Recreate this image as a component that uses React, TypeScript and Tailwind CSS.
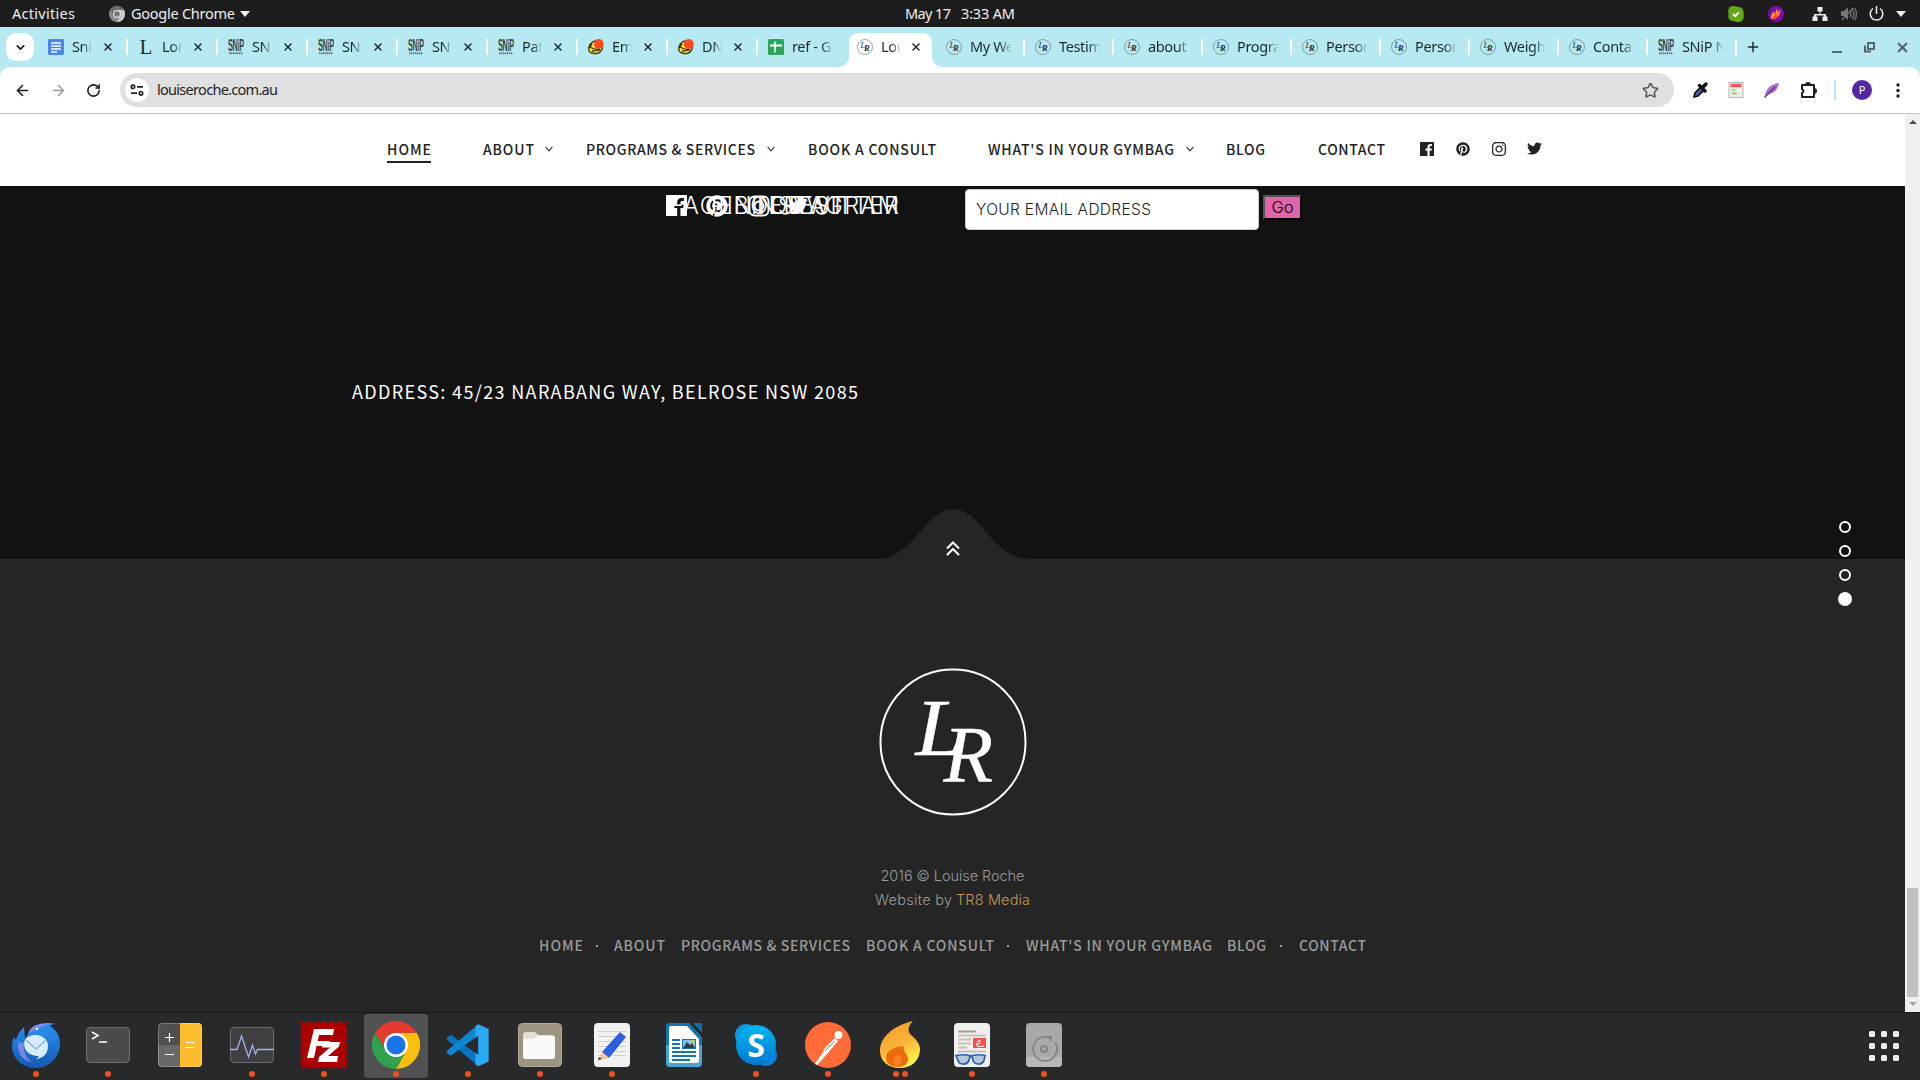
import React, { useLayoutEffect, useRef, useState } from 'react';
import { ArrowLeft, ArrowRight, ChevronDown, Plus, RotateCw, Star, X } from 'lucide-react';
import { FaPinterest, FaTwitter, FaInstagram } from 'react-icons/fa';

/** Single-line text whose tracking is adjusted so that it spans `w` pixels. */
function Fit({ w, children, className = '' }: { w: number; children: string; className?: string }) {
  const ref = useRef<HTMLSpanElement>(null);
  const [spacing, setSpacing] = useState(0);
  useLayoutEffect(() => {
    if (ref.current) {
      const natural = ref.current.getBoundingClientRect().width;
      setSpacing((w - natural) / (children.length - 1));
    }
  }, [w, children]);
  return (
    <span className={'block shrink-0 whitespace-pre ' + className} style={{ width: w }}>
      <span ref={ref} className="inline-block" style={{ letterSpacing: spacing }}>{children}</span>
    </span>
  );
}

const ubuntu = "font-['Noto_Sans',sans-serif]";
const cabin = "font-['Noto_Sans_CJK_SC','Noto_Sans',sans-serif]";
const mont = "font-['Inter',sans-serif]";

function FacebookSquare({ size }: { size: number }) {
  return (
    <svg width={size} height={size} viewBox="0 0 16 16" fill="currentColor" className="block shrink-0">
      <path d="M0 .6Q0 0 .6 0h14.8q.6 0 .6.6v14.8q0 .6-.6.6H11V9.900h2.100l.4-2.500H11V5.900c0-.8.3-1.300 1.400-1.300h1.200V2.300c-.3 0-1-.1-1.800-.1-2 0-3.300 1.200-3.300 3.300v1.900H6.300v2.500h2.200V16H.6Q0 16 0 15.400z" />
    </svg>
  );
}

/* ---------- system bar ---------- */

function SystemBar() {
  return (
    <div className={'flex h-[27px] items-center bg-[#1d1d1d] text-[14.5px] leading-[27px] text-[#f0f0f0] ' + ubuntu}>
      <div className="flex w-[905px] items-center pl-3">
        <Fit w={63}>Activities</Fit>
        <svg className="ml-[34px] shrink-0" width="16" height="16" viewBox="0 0 16 16">
          <circle cx="8" cy="8" r="8" fill="#8b8b8b" />
          <path d="M8 4h7a8 8 0 0 1-7 12l3.500-6z" fill="#c9c9c9" />
          <path d="M1.100 4A8 8 0 0 1 15 4H8L4.500 10z" fill="#6c6c6c" />
          <circle cx="8" cy="8" r="4" fill="#ddd" />
          <circle cx="8" cy="8" r="2.800" fill="#777" />
        </svg>
        <Fit w={104} className="ml-[6px]">Google Chrome</Fit>
        <svg className="ml-[5px]" width="10" height="6" viewBox="0 0 10 6"><path d="M0 0h10L5 6z" fill="#f0f0f0" /></svg>
      </div>
      <Fit w={46}>May 17</Fit>
      <Fit w={54} className="ml-[10px]">3:33 AM</Fit>
      <div className="ml-auto flex items-center pr-[14px]">
        <svg width="16" height="16" viewBox="0 0 16 16">
          <path d="M5 0C9 0 8 1 11 1c3 0 5 3 4.500 6 .5 3 1 9-5 9C7 16 7 15 5 15 1 15 0 12 .5 8.500 0 5 0 0 5 0z" fill="#61a812" />
          <path d="M5 8l2.200 2.200L11 6.200" stroke="#fff" strokeWidth="1.800" fill="none" />
        </svg>
        <svg className="ml-6" width="16" height="16" viewBox="0 0 16 16">
          <circle cx="8" cy="8" r="8" fill="#7b0ca6" />
          <path d="M3 13c-1-4 2-5 2-8l2 3 2-6 1 5 2-4c1 5-1 10-9 10z" fill="#ff9a1f" />
          <path d="M4 13c1-3 3-3 4-6l1 3 2-3c0 3-2 6-7 6z" fill="#ff3f2e" />
        </svg>
        <svg className="ml-[28px]" width="16" height="14" viewBox="0 0 16 14" fill="#eee">
          <path d="M5.500 0h5v4.500h-2V7H14v2.500h1.500V14h-5V9.500H12V8.500H4v1H5.500V14h-5V9.500H2V7h5.500V4.500h-2z" />
        </svg>
        <svg className="ml-[13px]" width="16" height="16" viewBox="0 0 16 16" stroke="#777" fill="none">
          <path d="M0 5h3l4-4v13l-4-4H0z" fill="#777" stroke="none" />
          <path d="M9 5q2 3 0 6M11 3q4 5 0 10M13.500 2q4 6 0 12M1 14L12 2" strokeWidth="1.300" />
        </svg>
        <svg className="ml-3" width="15" height="16" viewBox="0 0 15 16" stroke="#eee" strokeWidth="1.500" fill="none">
          <path d="M4 2.500a6.300 6.300 0 1 0 7 0M7.500 0v8" />
        </svg>
        <svg className="ml-[12px]" width="10" height="6" viewBox="0 0 10 6"><path d="M0 0h10L5 6z" fill="#f0f0f0" /></svg>
      </div>
    </div>
  );
}

/* ---------- tab strip ---------- */

type Fav = 'docs' | 'l' | 'snip' | 'mail' | 'sheet' | 'lr';

function Favicon({ kind }: { kind: Fav }) {
  switch (kind) {
    case 'docs':
      return (
        <svg className="shrink-0" width="16" height="16" viewBox="0 0 16 16">
          <rect width="16" height="16" rx="1.500" fill="#4a83f0" />
          <path d="M3 4h10M3 7h10M3 10h10M3 13h6" stroke="#fff" strokeWidth="1.600" />
        </svg>
      );
    case 'l':
      return <span className="w-4 shrink-0 text-center font-['Liberation_Serif',serif] text-[21px] leading-4 text-[#1f2b2d]">L</span>;
    case 'snip':
      return (
        <svg className="shrink-0" width="16" height="16" viewBox="0 0 16 16">
          <g transform="scale(.46 1)" fontFamily="Liberation Sans" fontWeight="700" fontSize="16" fill="#33464a">
            <text x="0" y="12" textLength="35" lengthAdjust="spacing">SNiP</text>
          </g>
          <path d="M1 14.200h14" stroke="#5f8086" strokeWidth="2" strokeDasharray="1.500 .5" />
          <path d="M9.800 4v7" stroke="#7fc9ae" strokeWidth="1" />
        </svg>
      );
    case 'mail':
      return (
        <svg className="shrink-0" width="16" height="16" viewBox="0 0 16 16">
          <path d="M1 8c1-4 5-7 9-6s5 5 4 8-4 5-8 4.500S0 12 1 8z" fill="#f6e03a" stroke="#3a3514" strokeWidth="1.300" />
          <path d="M2 8c3 2 6 3 10 2M4 12c2 0 5 0 8-1M1 9l3-4" stroke="#3a3514" strokeWidth="1.300" fill="none" />
          <circle cx="10.800" cy="5" r="4.900" fill="#fd4a22" />
        </svg>
      );
    case 'sheet':
      return (
        <svg className="shrink-0" width="16" height="16" viewBox="0 0 16 16">
          <rect width="16" height="16" rx="1.500" fill="#2aa657" />
          <path d="M2 6.500h12M7 2.500v11" stroke="#fff" strokeWidth="1.800" />
        </svg>
      );
    case 'lr':
      return (
        <svg className="shrink-0" width="16" height="16" viewBox="0 0 16 16">
          <circle cx="8" cy="8" r="7.500" fill="none" stroke="#5b7074" strokeWidth=".6" />
          <text x="3.500" y="9.300" fontFamily="Liberation Serif" fontStyle="italic" fontSize="8.500" fill="#1d2b2d">L</text>
          <text x="7" y="12.300" fontFamily="Liberation Serif" fontStyle="italic" fontWeight="700" fontSize="8.500" fill="#1d2b2d">R</text>
        </svg>
      );
  }
}

const fade = '[mask-image:linear-gradient(to_right,#000_55%,transparent_100%)]';

function TabTitle({ text, wide }: { text: string; wide?: boolean }) {
  return (
    <span className={'mb-[2px] shrink-0 overflow-hidden whitespace-pre text-[14.5px] leading-6 tracking-[-0.35px] text-[#1d2a2c] ' + (wide ? 'w-[42px] [mask-image:linear-gradient(to_right,#000_70%,transparent_100%)] ' : 'w-5 ' + fade)}>
      {text}
    </span>
  );
}

const closable: { fav: Fav; text: string }[] = [
  { fav: 'docs', text: 'Sni' },
  { fav: 'l', text: 'Lor' },
  { fav: 'snip', text: 'SN' },
  { fav: 'snip', text: 'SN' },
  { fav: 'snip', text: 'SN' },
  { fav: 'snip', text: 'Pat' },
  { fav: 'mail', text: 'Em' },
  { fav: 'mail', text: 'DN' },
];

const others: { fav: Fav; text: string }[] = [
  { fav: 'lr', text: 'My We' },
  { fav: 'lr', text: 'Testim' },
  { fav: 'lr', text: 'about' },
  { fav: 'lr', text: 'Progra' },
  { fav: 'lr', text: 'Person' },
  { fav: 'lr', text: 'Person' },
  { fav: 'lr', text: 'Weigh' },
  { fav: 'lr', text: 'Conta' },
  { fav: 'snip', text: 'SNiP N' },
];

function TabStrip() {
  return (
    <div className={'flex h-10 items-center bg-[#b6e9f1] ' + ubuntu}>
      <div className="ml-[6px] mr-1 flex h-7 w-7 shrink-0 items-center justify-center rounded-[10px] bg-white text-[#1a1a1a]">
        <ChevronDown size={13} strokeWidth={3} />
      </div>
      {closable.map((t, i) => (
        <div key={i} className="flex w-[90px] shrink-0 items-center pl-[10px]">
          <Favicon kind={t.fav} />
          <span className="w-2" />
          <TabTitle text={t.text} />
          <X size={12} strokeWidth={3} className="ml-[10px] text-[#1d2a2c]" />
          <span className="ml-auto h-4 w-[2px] bg-white" />
        </div>
      ))}
      <div className="flex w-[90px] shrink-0 items-center gap-2 pl-[10px]">
        <Favicon kind="sheet" />
        <TabTitle text="ref - G" wide />
      </div>
      <div className="relative ml-[1px] mr-[4px] mt-[6px] flex h-[34px] w-[83px] shrink-0 items-center rounded-t-[9px] bg-white pb-[6px] pl-2">
        <span className="absolute -left-[10px] bottom-0 h-[10px] w-[10px] bg-[radial-gradient(circle_at_0_0,transparent_9.500px,#fff_10px)]" />
        <span className="absolute -right-[10px] bottom-0 h-[10px] w-[10px] bg-[radial-gradient(circle_at_100%_0,transparent_9.500px,#fff_10px)]" />
        <Favicon kind="lr" />
        <span className="w-2" />
        <TabTitle text="Lou" />
        <X size={12} strokeWidth={3} className="ml-[9px] text-[#1d2a2c]" />
      </div>
      {others.map((t, i) => (
        <div key={i} className="flex w-[89px] shrink-0 items-center pl-[10px]">
          <Favicon kind={t.fav} />
          <span className="w-2" />
          <TabTitle text={t.text} wide />
          <span className="ml-auto h-4 w-[2px] bg-white" />
        </div>
      ))}
      <Plus size={16} strokeWidth={2.200} className="ml-[8px] shrink-0 text-[#1d2a2c]" />
      <div className="ml-auto flex items-center pr-[10px] text-[#55666a]">
        <span className="mt-[10px] h-[2px] w-[10px] bg-current" />
        <svg className="ml-[22px]" width="11" height="11" viewBox="0 0 11 11" fill="none" stroke="currentColor" strokeWidth="2">
          <path d="M4 1h6v6H4zM1 3.500V9.500h6" />
        </svg>
        <X size={15} strokeWidth={3.500} className="ml-[20px]" />
      </div>
    </div>
  );
}

/* ---------- toolbar ---------- */

function Toolbar() {
  return (
    <div className="bg-[#b6e9f1]">
      <div className={'flex h-[47px] items-center rounded-t-[10px] border-b border-[#c6c6c6] bg-white text-[#1f1f1f] ' + ubuntu}>
        <ArrowLeft size={17} strokeWidth={2.300} className="ml-[14px] shrink-0" />
        <ArrowRight size={17} strokeWidth={2.200} className="ml-[19px] shrink-0 text-[#9a9a9a]" />
        <RotateCw size={15} strokeWidth={2.600} className="ml-[19px] shrink-0" />
        <div className="ml-[19px] flex h-[34px] w-[1554px] shrink-0 items-center rounded-full bg-[#e0e0e0]">
          <span className="ml-[5px] flex h-6 w-6 items-center justify-center rounded-full bg-white">
            <svg width="14" height="12" viewBox="0 0 14 12" fill="none" stroke="#222" strokeWidth="1.700">
              <circle cx="3" cy="2.800" r="1.700" /><path d="M7 2.800h6M1 9.200h6" /><circle cx="11" cy="9.200" r="1.700" />
            </svg>
          </span>
          <Fit w={121} className="-mt-[2px] ml-2 text-[14.5px] leading-6">louiseroche.com.au</Fit>
          <Star size={17} strokeWidth={2.200} className="ml-auto mr-[15px] text-[#555]" />
        </div>
        <svg className="ml-[18px] shrink-0" width="17" height="18" viewBox="0 0 17 18">
          <path d="M2 16l1-4 6-6 3 3-6 6z" fill="#3f62c8" stroke="#111" strokeWidth="1.600" />
          <path d="M7.500 4.500l5.500 5.500M10 7l4-4" stroke="#111" strokeWidth="3.500" strokeLinecap="round" />
        </svg>
        <svg className="ml-[19px] shrink-0" width="16" height="16" viewBox="0 0 16 16">
          <rect x="1" y=".5" width="14" height="15" fill="#ececec" stroke="#b5b5b5" />
          <path d="M2.500 3.500h11" stroke="#f25b5b" strokeWidth="3.500" />
          <path d="M4 8h3M4 11.500h5" stroke="#8dc63f" strokeWidth="1.500" />
          <path d="M9 8h4" stroke="#fff" strokeWidth="2" />
        </svg>
        <svg className="ml-[20px] shrink-0" width="16" height="16" viewBox="0 0 16 16">
          <path d="M1 15C1 8 6 2 15 1c-1 6-4 10-11 11z" fill="#a86ccf" />
          <path d="M.5 15.500L11 5" stroke="#5d2e86" strokeWidth="1.200" />
        </svg>
        <svg className="ml-[20px] shrink-0" width="19" height="18" viewBox="0 0 19 18" fill="none" stroke="#1f1f1f" strokeWidth="2" strokeLinejoin="round">
          <path d="M2 4h12v12H2v-4q3-2 0-4z" />
          <path d="M6 4a2 2 0 0 1 4 0zM14 8a2 2 0 0 1 0 4z" fill="#1f1f1f" />
        </svg>
        <span className="ml-[15px] h-5 w-[2px] bg-[#b6e9f1]" />
        <span className="ml-[16px] flex h-5 w-5 items-center justify-center rounded-full bg-[#5527a4] text-[11px] text-white">P</span>
        <svg className="ml-[24px] shrink-0" width="4" height="15" viewBox="0 0 4 15" fill="#1f1f1f">
          <circle cx="2" cy="2" r="1.700" /><circle cx="2" cy="7.500" r="1.700" /><circle cx="2" cy="13" r="1.700" />
        </svg>
      </div>
    </div>
  );
}

/* ---------- site ---------- */

function Caret({ className }: { className: string }) {
  return (
    <svg className={'shrink-0 ' + className} width="8" height="6" viewBox="0 0 8 6" fill="none" stroke="#333" strokeWidth="1.100">
      <path d="M.6.8L4 4.800 7.400.8" />
    </svg>
  );
}

function SiteNav() {
  return (
    <nav className={'flex h-[72px] items-center bg-white pb-[3px] pl-[387px] text-[14px] font-medium leading-[20px] text-[#222] ' + cabin}>
      <div className="relative">
        <Fit w={44}>HOME</Fit>
        <span className="absolute -bottom-[4px] left-0 h-[2px] w-11 bg-[#222]" />
      </div>
      <Fit w={51} className="ml-[52px]">ABOUT</Fit>
      <Caret className="ml-[11px]" />
      <Fit w={169} className="ml-[33px]">PROGRAMS &amp; SERVICES</Fit>
      <Caret className="ml-[12px]" />
      <Fit w={128} className="ml-[33px]">BOOK A CONSULT</Fit>
      <Fit w={186} className="ml-[52px]">WHAT'S IN YOUR GYMBAG</Fit>
      <Caret className="ml-[12px]" />
      <Fit w={39} className="ml-[32px]">BLOG</Fit>
      <Fit w={67} className="ml-[53px]">CONTACT</Fit>
      <span className="ml-[35px]"><FacebookSquare size={14} /></span>
      <FaPinterest size={14} className="ml-[22px]" />
      <FaInstagram size={16} className="ml-[21px]" />
      <FaTwitter size={15} className="ml-[20px]" />
    </nav>
  );
}

function SocialOverlap() {
  return (
    <div className={'flex pl-[666px] pt-[7px] text-[23.5px] font-light leading-[26px] ' + mont}>
      <div className="relative h-[26px] w-[40px]">
        <span className="block pt-[2px]"><FacebookSquare size={21} /></span>
        <span className="absolute left-[4px] top-0"><Fit w={134}>FACEBOOK</Fit></span>
      </div>
      <div className="relative h-[26px] w-[41px]">
        <FaPinterest size={22} className="mt-[2px]" />
        <span className="absolute left-[5px] top-0"><Fit w={134}>PINTEREST</Fit></span>
      </div>
      <div className="relative h-[26px] w-[41px]">
        <FaInstagram size={24} className="mt-[1px]" />
        <span className="absolute left-[4px] top-0"><Fit w={148}>INSTAGRAM</Fit></span>
      </div>
      <div className="relative h-[26px] w-[41px]">
        <FaTwitter size={20} className="mt-[3px]" />
        <span className="absolute left-[3px] top-0"><Fit w={108}>TWITTER</Fit></span>
      </div>
    </div>
  );
}

function ContactSection() {
  return (
    <section className="relative h-[373px] bg-[#121212] text-white">
      <div className="flex h-[52px]">
        <div className="w-[965px] shrink-0"><SocialOverlap /></div>
        <div className={'mt-[3px] flex h-[41px] w-[294px] items-center rounded-[4px] border border-[#ccc] bg-white pl-[10px] text-[15.5px] font-light text-[#222] ' + mont}>
          <Fit w={175} className="leading-[36px]">YOUR EMAIL ADDRESS</Fit>
        </div>
        <div className={'ml-[4px] mt-[9px] flex h-[25px] w-[39px] items-center justify-center border-2 border-b-black border-l-[#555] border-r-black border-t-[#555] bg-[#e263ab] pb-[2px] text-[16.5px] font-light leading-[20px] text-black ' + mont}>
          <Fit w={22}>Go</Fit>
        </div>
      </div>
      <Fit w={506} className="ml-[352px] mt-[140px] font-['Noto_Sans_CJK_SC','Noto_Sans',sans-serif] text-[18px] leading-[27px]">
        ADDRESS: 45/23 NARABANG WAY, BELROSE NSW 2085
      </Fit>
      <svg className="absolute bottom-0 left-[873px]" width="160" height="51" viewBox="0 0 160 51">
        <path d="M0 51H5C42 49 52 1 80 1s38 48 75 50H160z" fill="#252525" />
        <path d="M74 40.500L80 34.500L86 40.500M74 47L80 41L86 47" fill="none" stroke="#fff" strokeWidth="2" />
      </svg>
    </section>
  );
}

function Logo() {
  return (
    <svg width="148" height="148" viewBox="0 0 148 148" className="mx-auto block" fill="#fff">
      <circle cx="74" cy="74" r="72.500" fill="none" stroke="#fff" strokeWidth="2" />
      <g fontFamily="Liberation Serif" fontStyle="italic" fontSize="81" stroke="#fff" strokeWidth=".5">
        <text x="36.500" y="87" textLength="49" lengthAdjust="spacingAndGlyphs">L</text>
        <text x="64.500" y="114">R</text>
      </g>
    </svg>
  );
}

function SiteFooter() {
  return (
    <footer className="h-[453px] bg-[#252525] pt-[109px] text-[#9b9b9b]">
      <Logo />
      <div className={'flex flex-col items-center text-[14.5px] font-light leading-6 ' + mont}>
        <Fit w={144} className="mt-[48px]">2016 © Louise Roche</Fit>
        <div className="flex gap-[4px]">
          <Fit w={77}>Website by</Fit>
          <Fit w={74} className="text-[#c39a5b]">TR8 Media</Fit>
        </div>
      </div>
      <div className={'mt-[21px] flex items-center pl-[539px] text-[14px] font-medium leading-6 ' + cabin}>
        <Fit w={44}>HOME</Fit>
        <span className="ml-[13px] mt-[2px] h-[2px] w-[2px] bg-current" />
        <Fit w={51} className="ml-[16px]">ABOUT</Fit>
        <Fit w={169} className="ml-[16px]">PROGRAMS &amp; SERVICES</Fit>
        <Fit w={128} className="ml-[16px]">BOOK A CONSULT</Fit>
        <span className="ml-[13px] mt-[2px] h-[2px] w-[2px] bg-current" />
        <Fit w={186} className="ml-[17px]">WHAT'S IN YOUR GYMBAG</Fit>
        <Fit w={39} className="ml-[15px]">BLOG</Fit>
        <span className="ml-[14px] mt-[2px] h-[2px] w-[2px] bg-current" />
        <Fit w={67} className="ml-[17px]">CONTACT</Fit>
      </div>
    </footer>
  );
}

function Scrollbar() {
  return (
    <div className="flex w-[15px] flex-col items-center bg-[#f0f0f0]">
      <svg className="mt-[6px] block" width="8" height="4" viewBox="0 0 8 4"><path d="M0 4h8L4 0z" fill="#505050" /></svg>
      <span className="mt-[764px] h-[109px] w-[11px] bg-[#c1c1c1]" />
      <svg className="mt-[5px] block" width="8" height="4" viewBox="0 0 8 4"><path d="M0 0h8L4 4z" fill="#a3a3a3" /></svg>
    </div>
  );
}

/* ---------- dock ---------- */

const stamp = Array.from({ length: 6 }, (_, i) => i * 7.7 + 5);

const dock: { dots: number; active?: boolean; art: React.ReactNode }[] = [
  {
    dots: 1,
    art: (
      <>
        <defs><linearGradient id="tb" x1="0" y1="0" x2="0" y2="1"><stop offset="0" stopColor="#2a92ee" /><stop offset="1" stopColor="#1659b5" /></linearGradient></defs>
        <path d="M16 14C18 5 30 1 44 4c-4 0-6 1-6 2 8 5 10 12 10 18 0 13-11 24-24 24C10 48 0 38 0 26c0-4 1-7 2-9l2 3c1-5 4-9 8-13l1 12z" fill="url(#tb)" />
        <path d="M16 14C18 6 28 2 42 4c-8 0-14 3-17 6-3 0-6 2-9 4zM6 22c-1 12 5 19 14 20-7-5-9-12-8-19z" fill="#9a8cf0" opacity=".75" />
        <path d="M15 15c12-8 27-2 29 9-4-6-9-9-15-9z" fill="#2a86ea" />
        <path d="M12 23c1-6 6-8 12-8s12 4 12 11-4 12-12 13c3-2 3-3 2-3-8 0-14-5-14-13z" fill="#d6edff" />
        <path d="M14 20l10 9 10-9" fill="none" stroke="#8fb7dc" strokeWidth="1.500" />
        <circle cx="25" cy="9" r="1.200" fill="#fff" />
      </>
    ),
  },
  {
    dots: 1,
    art: (
      <>
        <rect x="2.500" y="7.500" width="43" height="35" rx="3.500" fill="#4b4b4b" stroke="#707070" />
        <path d="M8 12l6 3.500L8 19M15 22h8" fill="none" stroke="#fff" strokeWidth="1.600" />
      </>
    ),
  },
  {
    dots: 0,
    art: (
      <>
        <rect x="2" y="3" width="44" height="44" rx="4" fill="#4f4f4f" />
        <path d="M2 25h22v22H6q-4 0-4-4z" fill="#686868" />
        <path d="M24 3h18q4 0 4 4v36q0 4-4 4H24z" fill="#fdbc2c" />
        <path d="M9 17.500h9M13.500 13v9M9 34.500h9M29 22.500h10M29 27.500h10" stroke="#fff" strokeWidth="1.200" />
        <rect x="2.500" y="3.500" width="43" height="43" rx="4" fill="none" stroke="#fff" strokeOpacity=".25" />
      </>
    ),
  },
  {
    dots: 1,
    art: (
      <>
        <rect x="2.500" y="7.500" width="43" height="35" rx="3.500" fill="#3f3f41" stroke="#6a6a6c" />
        <path d="M2 29.500h7L13.500 16l7 21 4-12 3 9 2-4.500H46" fill="none" stroke="#9fb5ee" strokeWidth="1.300" />
      </>
    ),
  },
  {
    dots: 1,
    art: (
      <>
        <rect x=".5" y="1.500" width="47" height="47" fill="#ac0000" />
        {stamp.map((p) => (
          <g key={p} fill="#28292b">
            <circle cx={p} cy="1.500" r="1.800" /><circle cx={p} cy="48.500" r="1.800" /><circle cx=".5" cy={p + 1} r="1.800" /><circle cx="47.500" cy={p + 1} r="1.800" />
          </g>
        ))}
        <path d="M14 9h20l-1 6H19l-1.300 6H30l-1 5H16.500L14 38H7z" fill="#fff" />
        <path d="M23 22h17l-1 4.500-11 9.500h10l-1 6H18l1-5 11-9.500h-8z" fill="#fff" />
      </>
    ),
  },
  {
    dots: 1,
    active: true,
    art: (
      <>
        <path d="M24 13h20.800A24 24 0 0 1 24 49L34 31z" fill="#fbbe0a" />
        <path d="M24 13h20.800A24 24 0 0 0 3.200 13L14 31z" fill="#e33b2e" />
        <path d="M3.200 13A24 24 0 0 0 24 49l10-18H14z" fill="#2fa24f" />
        <circle cx="24" cy="25" r="12" fill="#fff" /><circle cx="24" cy="25" r="9.500" fill="#1a73e8" />
      </>
    ),
  },
  {
    dots: 1,
    art: (
      <g transform="translate(0 1.500) scale(.95)">
        <path d="M3 17l4-3 29 21v12L3 19z" fill="#0a74c2" />
        <path d="M3 33l4 3 29-21V3L3 31z" fill="#0d86d4" />
        <path d="M36 3l11 5v34l-11 5-3-2V5z" fill="#2aaaf5" />
        <path d="M36 15v20L22 25z" fill="#28292b" />
      </g>
    ),
  },
  {
    dots: 1,
    art: (
      <>
        <rect x="2.500" y="3.500" width="43" height="43" rx="4" fill="#9c9480" stroke="#b5ae9d" />
        <path d="M7 15q0-3 3-3h9l3 3h14q3 0 3 3v18q0 3-3 3H10q-3 0-3-3z" fill="#e3e0d8" />
        <path d="M7 19h11l3-3h15q3 0 3 3v17q0 3-3 3H10q-3 0-3-3z" fill="#fbfbfa" />
      </>
    ),
  },
  {
    dots: 1,
    art: (
      <>
        <rect x="6" y="3" width="36" height="44" rx="4" fill="#f2f2f2" />
        <path d="M10 11.500h28M10 16.500h28M10 21.500h28M10 26.500h28M10 31.500h28M10 35.500h28" stroke="#cfcfcf" />
        <path d="M32 12l6 5-17 21-7-6z" fill="#2f5fe0" />
        <path d="M14 32l7 6-10 2z" fill="#f5c596" /><path d="M11 37l-1 3 4-1z" fill="#333" />
      </>
    ),
  },
  {
    dots: 0,
    art: (
      <>
        <path d="M9 3h20l13 14v26q0 4-4 4H10q-4 0-4-4V6q0-3 3-3z" fill="#1177ad" />
        <path d="M6 25h36v18q0 4-4 4H10q-4 0-4-4z" fill="#47a5d6" />
        <path d="M33 3h9v10z" fill="#0f6da5" />
        <path d="M11 6h16l12 13v22q0 2-2 2H11q-2 0-2-2V8q0-2 2-2z" fill="#fff" />
        <path d="M12 20h8M12 24h8M12 28h8M12 32h24M12 36h24M12 40h18" stroke="#1277ae" strokeWidth="1.800" />
        <rect x="22.500" y="19.500" width="13" height="9" fill="#7ec4ec" stroke="#1277ae" />
        <path d="M23 28l4-6 3 3 2-2 3 5z" fill="#3a3a3a" /><circle cx="33" cy="21.500" r="1.500" fill="#f7c51e" />
      </>
    ),
  },
  {
    dots: 1,
    art: (
      <>
        <defs><linearGradient id="sk" x1="0" y1="0" x2="0" y2="1"><stop offset="0" stopColor="#00b7f0" /><stop offset="1" stopColor="#0078d4" /></linearGradient></defs>
        <circle cx="14" cy="15" r="11" fill="#0a9be0" /><circle cx="34" cy="35" r="11" fill="#0d7fd6" />
        <circle cx="24" cy="25" r="20" fill="url(#sk)" />
        <text x="24" y="36.500" textAnchor="middle" fontFamily="Open Sans" fontWeight="700" fontSize="32" fill="#fff">S</text>
      </>
    ),
  },
  {
    dots: 1,
    art: (
      <>
        <circle cx="24" cy="25" r="23" fill="#ff6c37" />
        <circle cx="34.500" cy="15" r="4" fill="#fff" />
        <path d="M31 18l3 3-11 13-4-4zM20 31l3 3-10 11-2-1 6-9z" fill="#fff" />
        <path d="M21 31l10-10" stroke="#ff6c37" />
      </>
    ),
  },
  {
    dots: 2,
    art: (
      <>
        <defs><linearGradient id="fl" x1="0" y1="0" x2=".4" y2="1"><stop offset="0" stopColor="#f59a22" /><stop offset=".6" stopColor="#fbb23a" /><stop offset="1" stopColor="#fff04a" /></linearGradient></defs>
        <path d="M37 1C16 6 4 18 4 31c0 10 8 17 20 17s20-8 20-19c0-5-4-10-9-14-3-3-4-8 2-14z" fill="url(#fl)" />
        <path d="M28 26c-2 5 4 8 4 13 0 5-4 8-10 8s-12-3-12-9c0-7 7-11 18-12z" fill="#ee6a10" />
        <path d="M22 34c5 3 4 9-1 13-5-2-5-8 1-13z" fill="#f5821d" />
      </>
    ),
  },
  {
    dots: 1,
    art: (
      <>
        <rect x="6" y="3" width="36" height="44" rx="4" fill="#f0f0ee" />
        <path d="M10 11.500h18" stroke="#a99c8a" strokeWidth="2" />
        <path d="M10 15.500h28M10 19.500h13M10 23.500h13M10 27.500h9M10 31.500h28" stroke="#c6c1b4" strokeWidth="2" />
        <rect x="25" y="18" width="13" height="10" fill="#f4504b" />
        <path d="M28 25q5-1 4-4t-3 2 7 3" fill="none" stroke="#fff" />
        <path d="M8 35.500q7-1.500 14 0l-1 5q-2 4-6 3.500-4 0-5-3.500zM24 35.500q7-1.500 13 0l-1 5q-2 4-5.500 3.500-4 0-5.500-3.500z" fill="#b9c6d8" stroke="#2563b8" strokeWidth="1.700" />
        <path d="M21 37h4" stroke="#2563b8" strokeWidth="1.500" />
      </>
    ),
  },
  {
    dots: 1,
    art: (
      <>
        <rect x="6" y="3" width="36" height="44" rx="4" fill="#a9a9a9" />
        <path d="M6 37h36v6q0 4-4 4H10q-4 0-4-4z" fill="#b8b8b8" />
        <path d="M31 18.500A12 12 0 1 0 36 24V22M31 21v-4h-4" fill="none" stroke="#838383" strokeWidth="1.800" />
        <circle cx="24" cy="29" r="3" fill="none" stroke="#838383" strokeWidth="2" />
      </>
    ),
  },
];

function Dock() {
  return (
    <div className="flex h-[68px] items-start border-t border-[#17181a] bg-[#28292b] px-1 pt-px">
      {dock.map((d, i) => (
        <div key={i} className={'mr-2 flex h-16 w-16 flex-col items-center rounded-[4px] pt-[6px] ' + (d.active ? 'bg-[#505153]' : '')}>
          <svg width="48" height="50" viewBox="0 0 48 50" className="block shrink-0">{d.art}</svg>
          <span className="mt-px flex gap-[3px]">
            {Array.from({ length: d.dots }, (_, n) => (
              <span key={n} className="h-[6px] w-[6px] rounded-full bg-[#e95420]" />
            ))}
          </span>
        </div>
      ))}
      <div className="ml-auto mr-[17px] mt-[17px] grid grid-cols-3 gap-[6px]">
        {Array.from({ length: 9 }, (_, n) => (
          <span key={n} className="h-[6px] w-[6px] rounded-[1.500px] bg-[#eeeeec]" />
        ))}
      </div>
    </div>
  );
}

export default function App() {
  return (
    <div className="h-[1080px] w-[1920px] overflow-hidden bg-[#252525]">
      <SystemBar />
      <TabStrip />
      <Toolbar />
      <div className="flex h-[898px]">
        <main className="relative w-[1905px] shrink-0">
          <SiteNav />
          <ContactSection />
          <SiteFooter />
          <div className="absolute left-[1838px] top-[406px] flex w-[14px] flex-col items-center gap-3">
            <span className="my-[0.5px] h-3 w-3 rounded-full border-2 border-white" />
            <span className="h-3 w-3 rounded-full border-2 border-white" />
            <span className="h-3 w-3 rounded-full border-2 border-white" />
            <span className="-mt-[1px] h-[14px] w-[14px] rounded-full bg-white" />
          </div>
        </main>
        <Scrollbar />
      </div>
      <Dock />
    </div>
  );
}
